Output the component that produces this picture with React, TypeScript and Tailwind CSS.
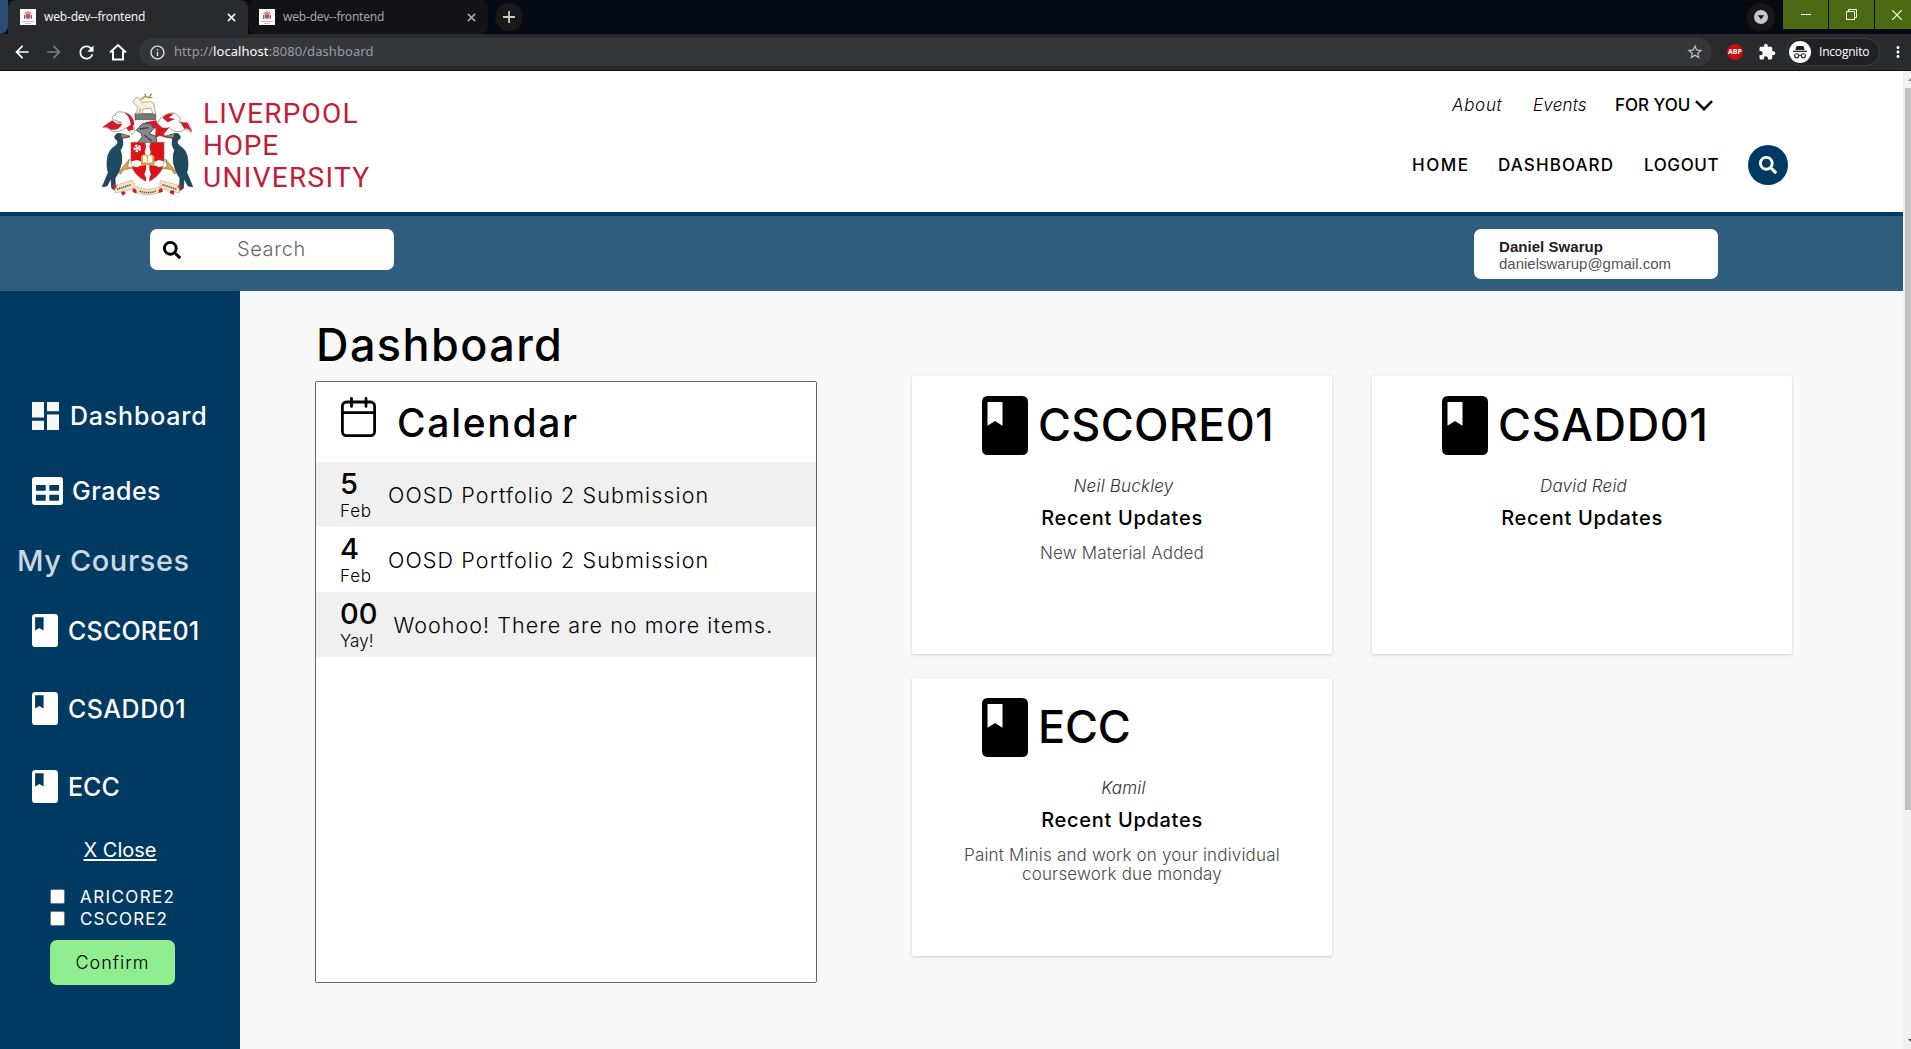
import React from "react";
import { FaSearch } from "react-icons/fa";
import { MdExtension, MdStarBorder, MdInfoOutline, MdArrowBack, MdArrowForward, MdRefresh, MdMoreVert } from "react-icons/md";

function Crest({ className }: { className?: string }) {
  const bird = (
    <>
      <path
        d="M104 153 L78 146 Q66 142 60 152 Q56 159 66 166 Q72 174 62 182 Q40 194 37 222 Q34 250 40 262 L22 305 L36 303 L48 280 L50 310 L62 318 L60 280 Q74 262 80 232 Q82 210 76 196 Q88 180 82 160 L104 156Z"
        fill="#1d4a5e"
        stroke="#12303f"
        strokeWidth="2"
      />
      <path d="M78 148 L106 153 L80 158Z" fill="#b58a3c" />
      <path d="M72 262 L88 240 L104 222 L98 244 L110 250 L86 254 L76 268Z" fill="#d9a648" stroke="#6b4a1c" strokeWidth="1.500" />
    </>
  );
  return (
    <svg className={className} viewBox="0 0 330 345" fill="none">
      <path d="M120 86 h62 v18 h-62z" fill="#777a7c" stroke="#444" strokeWidth="2" />
      <path
        d="M124 86 L128 66 L122 60 L114 52 L118 42 L124 38 L134 40 L140 52 L166 50 Q180 52 178 66 L182 86 L174 86 L168 70 L146 72 L140 86 L134 86 L136 70 L132 86Z"
        fill="#f5f1df"
        stroke="#a9a48a"
        strokeWidth="2.500"
      />
      <path d="M138 44 L150 34 L162 38 L170 26 M152 34 L150 26 M162 38 L172 38" stroke="#a98f2e" strokeWidth="4" />
      <path d="M120 138 Q112 96 88 82 Q58 76 62 92 Q46 90 54 104 L80 112 Q62 116 50 110 L24 128 Q44 126 48 138 Q74 144 94 128 L112 148Z" fill="#fff" stroke="#777" strokeWidth="2" />
      <path d="M22 126 L52 106 L64 116 L82 116 Q72 138 48 134 Q36 122 22 126Z M88 82 Q116 88 118 118 L106 130 Q110 100 88 82Z M94 128 L112 116 L116 134 L100 138Z" fill="#d31b2a" />
      <path d="M184 130 Q188 100 210 90 Q236 76 248 92 Q262 98 252 112 L276 112 Q292 124 288 142 Q272 126 258 140 Q232 142 222 126 L204 152Z" fill="#fff" stroke="#777" strokeWidth="2" />
      <path d="M202 98 Q216 82 236 86 L222 98 L240 102 L218 112Z M256 112 L278 114 L292 142 Q276 126 268 132Z M184 112 L202 128 L222 128 L206 146 L214 158 L194 152 L180 160Z M150 112 L184 106 L190 128 L160 134Z" fill="#d31b2a" />
      <path d="M124 136 L142 116 L166 116 L176 130 L164 146 L182 154 L186 170 L150 178 L126 174 L142 156 L138 144Z" fill="#85888c" stroke="#4b4e52" strokeWidth="3" />
      <path d="M134 132 L160 128 M148 150 L170 168" stroke="#3c3e42" strokeWidth="4" />
      <path d="M108 172 H207 V232 Q204 268 158 292 Q110 268 108 232Z" fill="#dd1219" stroke="#8f6b4a" strokeWidth="2" />
      <path d="M151 173 h15 l-3 12 l4 16 l-4 12 v20 l20 -4 l8 -4 l15 4 v14 l-15 4 l-8 -5 l-20 -2 v14 l5 14 l-5 10 v14 l-5 4 l-5 -4 v-14 l-5 -10 l5 -14 v-14 l-18 2 l-8 5 l-18 -4 v-14 l18 -4 l8 4 l18 4 v-20 l-4 -12 l4 -16z" fill="#fff" />
      <circle cx="127" cy="190" r="8" fill="#dd1219" stroke="#fff" strokeWidth="7" strokeDasharray="7 3" />
      <circle cx="127" cy="190" r="4" fill="#fff" />
      <path d="M138 213 L157 210 L178 213 V240 H138Z" fill="#d8a640" />
      <path d="M143 210 Q152 208 157 214 Q164 208 173 210 V234 Q164 232 157 237 Q152 232 143 234Z" fill="#fff6dc" stroke="#b7852a" strokeWidth="1.500" />
      <path d="M157 213 V237" stroke="#8a6a2a" strokeWidth="1.500" />
      {bird}
      <g transform="matrix(-1 0 0 1 315 0)">{bird}</g>
      <path d="M54 302 L112 286 L120 296 L116 312 L62 324Z M196 286 L256 302 L252 324 L200 312 L194 298Z M122 304 Q158 322 194 304 L192 322 Q158 338 122 322Z" fill="#f3e3c4" stroke="#b39c7c" strokeWidth="1.500" />
      <path d="M66 313 L108 299 M202 299 L246 313 M134 318 Q158 328 182 318" stroke="#5d5245" strokeWidth="5" strokeDasharray="4 2.500" />
      <path d="M50 302 q10 -8 16 2 l-8 10z M78 322 q12 -8 14 4 l-10 6z M114 310 q14 2 10 16 l-12 -6z M200 308 q-12 4 -8 16 l12 -4z M238 318 q-14 -6 -14 6 l12 6z M262 302 q-10 -6 -14 2 l8 12z" fill="#c8202c" />
    </svg>
  );
}

function Book({ className }: { className?: string }) {
  return (
    <svg className={className} viewBox="0 0 46 59" preserveAspectRatio="none" fill="currentColor">
      <path
        fillRule="evenodd"
        d="M6 0 H40 Q46 0 46 6 V53 Q46 59 40 59 H6 Q0 59 0 53 V6 Q0 0 6 0Z M5.500 6 V29.700 L13 25 L20.500 29.700 V6Z"
      />
    </svg>
  );
}

function Favicon() {
  return (
    <span className="flex size-4 flex-col items-center bg-white">
      <svg viewBox="0 0 16 16" className="size-4">
        <path d="M7 1.500h2l1 2h-3z" fill="#ccc" />
        <path d="M4 4l3-1h2l3 1-2 2H6z" fill="#e08a92" />
        <path d="M4 6h1.500v3.500L4 10zM10.500 6H12v4l-1.500-.5z" fill="#5c707c" />
        <path d="M6 5.500h4v3.500l-2 1-2-1z" fill="#cf4a55" />
        <path d="M2 12.500h12M5 14.500h6" stroke="#e6b0b6" strokeWidth="1" />
      </svg>
    </span>
  );
}

function Cross({ className }: { className?: string }) {
  return (
    <svg viewBox="0 0 10 10" className={className}>
      <path d="M1 1l8 8M9 1l-8 8" stroke="currentColor" strokeWidth="1.800" />
    </svg>
  );
}

function Browser() {
  return (
    <div className="h-[71px] shrink-0 border-b border-[#15111a] bg-[#292a2d] font-['Open_Sans',sans-serif]">
      <div className="flex h-[34px] bg-[#050b15]">
        <div className="w-2 rounded-br-lg bg-[#2a4d72]" />
        <div className="flex w-[240px] items-center rounded-t-lg bg-[#292a2d] pl-3 text-xs text-[#f1f3f4]">
          <Favicon />
          <span className="ml-2 w-[183px] font-['Noto_Sans',sans-serif] tracking-[-0.2px]">web-dev--frontend</span>
          <Cross className="size-[9px]" />
        </div>
        <div className="flex w-[240px] items-center rounded-lg bg-[#131317] pl-[11px] text-xs text-[#a2a5a9]">
          <Favicon />
          <span className="ml-2 w-[184px] font-['Noto_Sans',sans-serif] tracking-[-0.2px]">web-dev--frontend</span>
          <Cross className="size-[9px]" />
        </div>
        <div className="ml-[7px] mt-[3px] flex size-7 items-center justify-center rounded-full bg-[#18181b]">
          <svg viewBox="0 0 12 12" className="size-3">
            <path d="M6 0v12M0 6h12" stroke="#c8cacd" strokeWidth="1.800" />
          </svg>
        </div>
        <div className="ml-auto mt-[3px] flex size-7 items-center justify-center rounded-full bg-[#17161a]">
          <svg viewBox="0 0 14 14" className="size-3.5">
            <circle cx="7" cy="7" r="7" fill="#c6c7c9" />
            <path d="M3.800 5.200h6.400L7 9.500z" fill="#17161a" />
          </svg>
        </div>
        <div className="ml-2 flex h-[29px] w-[128px] gap-px">
          <div className="flex w-[45px] items-center justify-center bg-[#4b6a11]">
            <div className="h-px w-2.5 bg-white" />
          </div>
          <div className="flex w-[45px] items-center justify-center bg-[#4b6a11]">
            <svg viewBox="0 0 11 11" className="size-[11px]" fill="none" stroke="#fff">
              <path d="M.5 2.500h8v8h-8zM2.500 2.500v-2h8v8h-2" />
            </svg>
          </div>
          <div className="flex w-9 items-center bg-[#4b6a11] pl-[17px]">
            <svg viewBox="0 0 10 10" className="size-2.5">
              <path d="M0 0l10 10M10 0L0 10" stroke="#fff" strokeWidth="1.200" />
            </svg>
          </div>
        </div>
      </div>
      <div className="flex h-9 items-center pl-3 text-white">
        <MdArrowBack className="size-5" />
        <MdArrowForward className="ml-3 size-5 text-[#7b7c7f]" />
        <MdRefresh className="ml-3 size-[21px]" />
        <svg viewBox="0 0 18 18" className="ml-3 size-[18px]" fill="none" stroke="#fff" strokeWidth="2">
          <path d="M1 9.500L9 2l8 7.500M4 8v8.500h10V8" />
        </svg>
        <div className="ml-[12px] flex h-7 w-[1573px] items-center rounded-full bg-[#35363a] pl-2.5 text-[13px] text-[#9a9da1]">
          <MdInfoOutline className="size-[17px] text-[#dfe1e3]" />
          <span className="ml-2 font-['Noto_Sans',sans-serif] tracking-[0.07px]">
            http://<span className="text-white">localhost</span>:8080/dashboard
          </span>
          <MdStarBorder className="ml-auto mr-2 size-[18px] text-[#c3c5c8]" />
        </div>
        <div className="ml-[15px] flex size-4 items-center justify-center rounded-full bg-[#c70d0d] text-[7px] font-bold">
          ABP
        </div>
        <MdExtension className="ml-[15px] size-[18px]" />
        <div className="ml-2.5 flex h-7 w-[94px] items-center rounded-full border border-[#3c3d41] bg-[#202124] pl-0.5 text-xs">
          <svg viewBox="0 0 22 22" className="size-[22px]">
            <circle cx="11" cy="11" r="11" fill="#fff" />
            <path d="M7.500 5l7 0 1.200 4H6.300zM4 9.700h14v1.200H4z" fill="#202124" />
            <path d="M9.800 14.500q1.200-.8 2.400 0" stroke="#202124" fill="none" />
            <circle cx="7.600" cy="14.800" r="2" fill="none" stroke="#202124" strokeWidth="1.100" />
            <circle cx="14.400" cy="14.800" r="2" fill="none" stroke="#202124" strokeWidth="1.100" />
          </svg>
          <span className="ml-2 tracking-[-0.2px]">Incognito</span>
        </div>
        <MdMoreVert className="ml-[9px] size-[18px]" />
      </div>
    </div>
  );
}

function Header() {
  return (
    <header className="flex h-[145px] shrink-0 border-b-4 border-[#003a63] bg-white">
      <div className="flex w-[1411px] pl-[95px] pt-3.5">
        <Crest className="h-[115px] w-[110px]" />
        <div className="-ml-[2px] mt-[13px] flex flex-col font-['Roboto',sans-serif] text-[28px] leading-8 text-[#bf2038]">
          <span className="tracking-[1.200px]">LIVERPOOL</span>
          <span className="tracking-[0.800px]">HOPE</span>
          <span className="tracking-[1.300px]">UNIVERSITY</span>
        </div>
      </div>
      <nav className="text-[17px] text-black">
        <div className="mt-5 flex h-7 items-center pl-[41px]">
          <a className="w-[81px] pt-0.5 font-light italic tracking-[0.700px]">About</a>
          <a className="w-[82px] pt-0.5 font-light italic tracking-[0.200px]">Events</a>
          <a className="w-[80px] pt-0.5 font-medium">FOR YOU</a>
          <svg viewBox="0 0 18 11" className="h-[11px] w-[18px]" fill="none" stroke="#000" strokeWidth="2.600">
            <path d="M1 1.200l8 8 8-8" />
          </svg>
        </div>
        <div className="mt-[26px] flex h-10 items-center pl-px font-medium">
          <a className="w-[86px] pt-0.5 tracking-[1.500px]">HOME</a>
          <a className="w-[146px] pt-0.5 tracking-[1.100px]">DASHBOARD</a>
          <a className="w-[104px] pt-0.5 tracking-[0.600px]">LOGOUT</a>
          <a className="flex size-10 items-center justify-center rounded-full bg-[#003a63] text-white">
            <FaSearch className="size-[18px]" />
          </a>
        </div>
      </nav>
    </header>
  );
}

function Toolbar() {
  return (
    <div className="flex h-[75px] shrink-0 items-start justify-between bg-[#2f5d7e] pl-[150px] pr-[185px] pt-[13px]">
      <div className="flex h-[41px] w-[244px] items-center rounded-[7px] bg-white pl-[13px]">
        <FaSearch className="size-[18px]" />
        <span className="ml-[56px] pb-px text-xl font-light tracking-[0.600px] text-[#6a6a6a]">Search</span>
      </div>
      <div className="h-[50px] w-[244px] rounded-[7px] bg-white pl-[25px] pt-[9px] font-['Liberation_Sans',sans-serif] text-[15px] leading-[17px]">
        <div className="font-bold tracking-[0.050px] text-[#222]">Daniel Swarup</div>
        <div className="text-[#555]">danielswarup@gmail.com</div>
      </div>
    </div>
  );
}

const sideCourses = [
  { name: "CSCORE01", cls: "tracking-[0.200px]" },
  { name: "CSADD01", cls: "tracking-[0.500px]" },
  { name: "ECC", cls: "" },
];

function Sidebar() {
  return (
    <aside className="w-[240px] shrink-0 bg-[#003a63] pt-[105px] text-white">
      <div className="pl-8 text-[25px] font-medium">
        <div className="flex h-10 items-center">
          <svg viewBox="0 0 27 28" className="h-7 w-[27px]" fill="#f7f7f7">
            <path d="M0 0h12v15.500H0zM0 18.700h12V28H0zM15 0h12v9.300H15zM15 12.500h12V28H15z" />
          </svg>
          <span className="ml-[11px] pt-0.5 tracking-[0.800px]">Dashboard</span>
        </div>
        <div className="mt-[35px] flex h-10 items-center">
          <svg viewBox="0 0 31 28" className="h-7 w-[31px]" fill="#fff">
            <path fillRule="evenodd" d="M3 0h25q3 0 3 3v22q0 3-3 3H3q-3 0-3-3V3q0-3 3-3zM4 8v5.700h9.700V8zM17.300 8v5.700H27V8zM4 17.700v6h9.700v-6zM17.300 17.700v6H27v-6z" />
          </svg>
          <span className="ml-[9px] pt-0.5 tracking-[0.500px]">Grades</span>
        </div>
      </div>
      <h2 className="mt-[30px] pl-[17px] text-[29px] font-medium leading-10 tracking-[0.600px] text-[#ccd8e0]">My Courses</h2>
      <div className="mt-[29px] flex flex-col gap-[38px] pl-8 text-[25px] font-medium">
        {sideCourses.map((c) => (
          <div key={c.name} className="flex h-10 items-center">
            <Book className="h-[33px] w-[26px]" />
            <span className={"ml-2.5 pt-[3px] " + c.cls}>{c.name}</span>
          </div>
        ))}
      </div>
      <div className="mt-8 text-center text-xl leading-6 underline underline-offset-2">X Close</div>
      <div className="mt-[24px] pl-[50px] text-[17px]">
        <div className="flex h-[22px] items-center">
          <span className="mb-[2px] size-[15px] rounded-[2px] border border-[#767676] bg-white" />
          <span className="ml-[15px] pt-px tracking-[1.400px]">ARICORE2</span>
        </div>
        <div className="flex h-[22px] items-center">
          <span className="mb-[2px] size-[15px] rounded-[2px] border border-[#767676] bg-white" />
          <span className="ml-[15px] pt-px tracking-[1.100px]">CSCORE2</span>
        </div>
        <button className="mt-2.5 h-[45px] w-[125px] rounded-[7px] bg-[#90ee90] text-lg font-light tracking-[1px] text-black">
          Confirm
        </button>
      </div>
    </aside>
  );
}

const events = [
  { day: "5", month: "Feb", title: "OOSD Portfolio 2 Submission", mcls: "tracking-[0.800px]", cls: "ml-[14px] tracking-[1.120px]" },
  { day: "4", month: "Feb", title: "OOSD Portfolio 2 Submission", mcls: "tracking-[0.800px]", cls: "ml-[14px] tracking-[1.120px]" },
  { day: "00", month: "Yay!", title: "Woohoo! There are no more items.", mcls: "", cls: "ml-4 tracking-[1.050px]" },
];

function Calendar() {
  return (
    <section className="mt-1.5 h-[602px] rounded-[2px] border border-[#666] bg-white">
      <div className="flex h-20 pl-[25px] pt-[15px]">
        <svg viewBox="0 0 35 40" className="h-10 w-[35px]" fill="none" stroke="#000" strokeWidth="2.800" strokeLinecap="round">
          <rect x="1.400" y="5" width="32.200" height="33.600" rx="4" />
          <path d="M1.400 15.700h32.200M10.500 1.400v8M25 1.400v8" />
        </svg>
        <h2 className="ml-[21px] mt-[6px] text-[39px] font-medium leading-10 tracking-[1.700px]">Calendar</h2>
      </div>
      {events.map((e) => (
        <div key={e.day} className="flex h-[65px] items-center pl-6 odd:bg-white even:bg-[#f0f0f0]">
          <div className="min-w-[34px] pt-[5px]">
            <div className="text-[29px] font-medium leading-[28px]">{e.day}</div>
            <div className={"text-[17px] font-light leading-[26px] " + e.mcls}>{e.month}</div>
          </div>
          <div className={"pt-0.5 text-[21.500px] font-light " + e.cls}>{e.title}</div>
        </div>
      ))}
    </section>
  );
}

const courses = [
  { name: "CSCORE01", cls: "tracking-[0.300px]", tutor: "Neil Buckley", update: "New Material Added" },
  { name: "CSADD01", cls: "tracking-[0.600px]", tutor: "David Reid", update: "" },
  { name: "ECC", cls: "tracking-[-0.200px]", tutor: "Kamil", update: "Paint Minis and work on your individual coursework due monday" },
];

function Cards() {
  return (
    <div className="ml-[95px] mt-[85px] grid auto-rows-[278px] grid-cols-[420px_420px] content-start gap-x-10 gap-y-6">
      {courses.map((c) => (
        <article key={c.name} className="rounded-[2px] bg-white pt-5 text-center shadow-[0_1px_3px_rgba(0,0,0,0.18)]">
          <div className="flex h-[59px] pl-[70px]">
            <Book className="h-[59px] w-[46px]" />
            <h2 className={"ml-2.5 text-[45px] font-medium leading-[57px] " + c.cls}>{c.name}</h2>
          </div>
          <p className="mt-5 pl-[3px] text-[17px] font-light italic leading-[22px] tracking-[0.200px] text-[#333]">{c.tutor}</p>
          <h3 className="mt-[9px] text-xl font-medium leading-6 tracking-[0.700px]">Recent Updates</h3>
          <p className="mx-[45px] mt-[14px] text-[17px] font-light leading-[19px] tracking-[0.180px] text-[#4a4a4a]">{c.update}</p>
        </article>
      ))}
    </div>
  );
}

export default function App() {
  return (
    <div className="flex h-[1049px] w-[1911px] flex-col overflow-hidden bg-[#f8f8f8] font-['Inter',sans-serif] text-black">
      <Browser />
      <div className="flex min-h-0 flex-1">
        <div className="flex w-[1903px] flex-col">
          <Header />
          <Toolbar />
          <div className="flex min-h-0 flex-1">
            <Sidebar />
            <main className="flex pl-[75px]">
              <div className="w-[502px] pt-6">
                <h1 className="pl-px text-[45px] font-medium leading-[60px] tracking-[1.400px]">Dashboard</h1>
                <Calendar />
              </div>
              <Cards />
            </main>
          </div>
        </div>
        <div className="flex w-2 flex-col items-end bg-[#f1f1f1]">
          <svg viewBox="0 0 3 5" className="mt-[6px] h-[5px] w-[3px]">
            <path d="M0 4L3 1V4z" fill="#8a8a8a" />
          </svg>
          <div className="mt-[6px] h-[722px] w-1.5 bg-[#c1c1c1]" />
          <svg viewBox="0 0 3 4" className="mb-[6px] mt-auto h-1 w-[3px]">
            <path d="M0 0H3V3z" fill="#444" />
          </svg>
        </div>
      </div>
    </div>
  );
}
